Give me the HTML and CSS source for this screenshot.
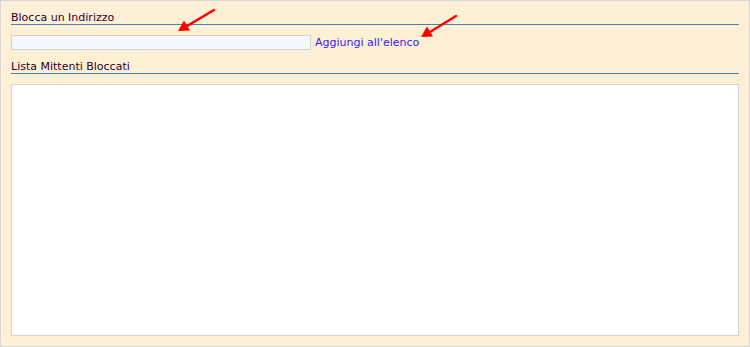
FILE: index.html
```html
<!DOCTYPE html>
<html lang="it">
<head>
  <meta charset="UTF-8">
  <meta name="viewport" content="width=device-width, initial-scale=1.0">
  <title>Mittenti Bloccati</title>
  <link rel="stylesheet" href="styles.css">
</head>
<body>
  <div class="panel">
    <div class="section-title">Blocca un Indirizzo</div>
    <div class="add-row">
      <input type="text" class="address-input">
      <a href="#" class="add-link">Aggiungi all'elenco</a>
    </div>
    <div class="section-title">Lista Mittenti Bloccati</div>
    <div class="blocked-list"></div>

    <!-- annotation arrows -->
    <svg class="annotations" width="750" height="347" viewBox="0 0 750 347">
      <g stroke="#ff0000" stroke-width="2.5" stroke-linecap="round" fill="#ff0000">
        <line x1="214" y1="10" x2="187" y2="26"/>
        <polygon points="178,31 190,30.5 184,20.5" stroke="none"/>
        <line x1="456" y1="16" x2="430" y2="32"/>
        <polygon points="421,37 433,36.5 427,26.5" stroke="none"/>
      </g>
    </svg>
  </div>
</body>
</html>
```

FILE: styles.css
```css
body {
  margin: 0;
  font-family: Verdana, 'DejaVu Sans', sans-serif;
  font-size: 11px;
}

.panel {
  position: relative;
  display: flex;
  flex-direction: column;
  width: 750px;
  height: 347px;
  box-sizing: border-box;
  padding: 10px;
  border: 1px solid #d6d6d6;
  background-color: #fef0d5;
}

.section-title {
  height: 13px;
  line-height: 13px;
  color: #2a002a;
  border-bottom: 1px solid #4682b4;
}

.add-row {
  display: flex;
  align-items: center;
  margin: 10px 0;
}

.address-input {
  width: 300px;
  height: 15px;
  box-sizing: border-box;
  margin: 0;
  padding: 0 2px;
  border: 1px solid #d3d3d3;
  background-color: #f2faff;
  font: inherit;
}

.add-link {
  margin-left: 4px;
  color: #3322ff;
  text-decoration: none;
}

.blocked-list {
  flex: 1;
  margin-top: 10px;
  border: 1px solid #d3d3d3;
  background-color: #fff;
}

.annotations {
  position: absolute;
  left: -1px;
  top: -1px;
  pointer-events: none;
}
```
